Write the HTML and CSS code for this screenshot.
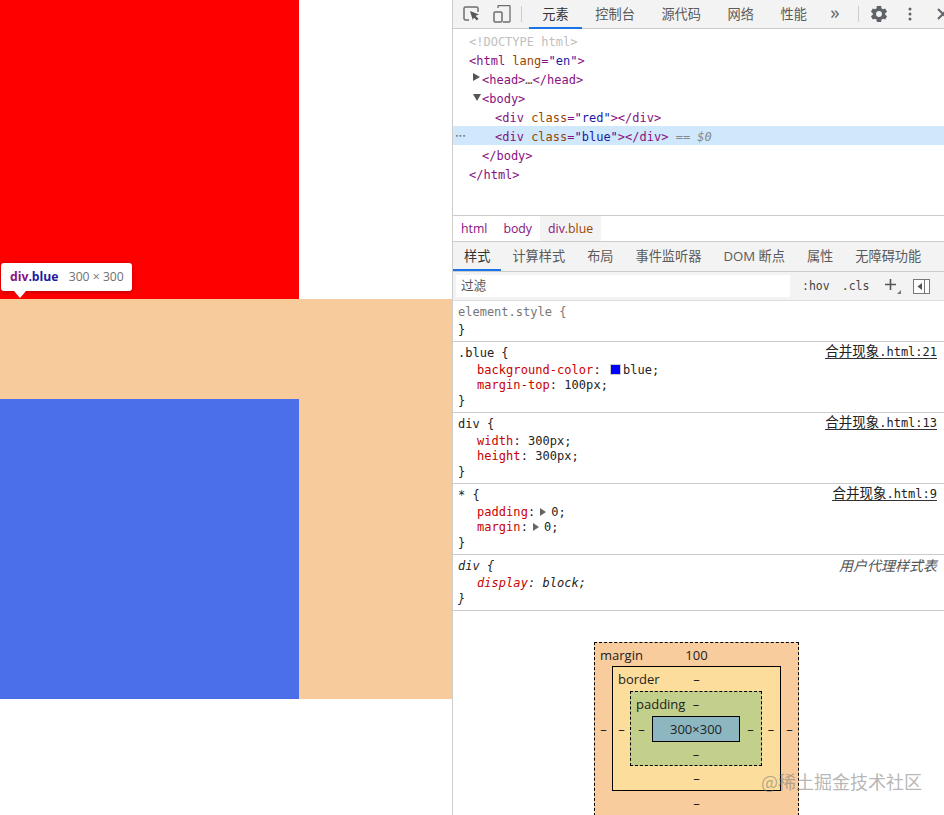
FILE: index.html
```html
<!DOCTYPE html>
<html lang="en">
  <head>
    <meta charset="UTF-8" />
    <meta name="viewport" content="width=device-width, initial-scale=1.0" />
    <title>合并现象</title>
    <link rel="stylesheet" href="styles.css">
  </head>
  <body>
    <div class="page">
      <!-- page being inspected -->
      <div class="viewport">
        <div class="red"></div>
        <div class="margin-area">
          <div class="blue"></div>
        </div>
        <div class="tooltip">
          <span class="tip-tag">div</span><span class="tip-class">.blue</span>
          <span class="tip-size">300 × 300</span>
        </div>
      </div>

      <!-- devtools -->
      <div class="devtools">
        <div class="toolbar">
          <div class="tool-icons">
            <svg class="icon-inspect" width="18" height="16" viewBox="0 0 18 16">
              <path d="M6 14H2.5A1.5 1.5 0 0 1 1 12.500V2.500A1.500 1.500 0 0 1 2.500 1H13.500A1.500 1.500 0 0 1 15 2.500V6" fill="none" stroke="#6e6e6e" stroke-width="1.500" />
              <path d="M7 5l9 3.500-3.500 1.300 3 3-1.600 1.600-3-3L9.800 14z" fill="#555" />
            </svg>
            <svg class="icon-device" width="18" height="18" viewBox="0 0 18 18">
              <path d="M5 3V1.500A1 1 0 0 1 6 .5H16A1 1 0 0 1 17 1.500V16A1 1 0 0 1 16 17H10" fill="none" stroke="#6e6e6e" stroke-width="1.300" />
              <rect x="1" y="7" width="8" height="10" rx="1" fill="none" stroke="#6e6e6e" stroke-width="1.500" />
            </svg>
          </div>
          <span class="sep"></span>
          <div class="tab active">元素</div>
          <div class="tab">控制台</div>
          <div class="tab">源代码</div>
          <div class="tab">网络</div>
          <div class="tab">性能</div>
          <div class="more">»</div>
          <span class="sep sep-right"></span>
          <svg class="icon-gear" width="20" height="20" viewBox="0 0 24 24">
            <path fill="#5f6368" fill-rule="evenodd" d="M19.400 13a7.600 7.600 0 0 0 0-2l2.300-1.700-2.300-4-2.600 1.100a7.400 7.400 0 0 0-1.800-1L14.600 2.500H9.400L9 5.400a7.400 7.400 0 0 0-1.800 1L4.600 5.300l-2.300 4L4.600 11a7.600 7.600 0 0 0 0 2l-2.300 1.700 2.300 4 2.600-1.100a7.400 7.400 0 0 0 1.800 1l.4 2.900h5.200l.4-2.900a7.400 7.400 0 0 0 1.800-1l2.600 1.100 2.300-4zM12 15.500a3.500 3.500 0 1 1 0-7 3.500 3.500 0 0 1 0 7z" />
          </svg>
          <svg class="icon-dots" width="4" height="14" viewBox="0 0 4 14">
            <circle cx="2" cy="2" r="1.500" fill="#5f6368" />
            <circle cx="2" cy="7" r="1.500" fill="#5f6368" />
            <circle cx="2" cy="12" r="1.500" fill="#5f6368" />
          </svg>
          <svg class="icon-close" width="12" height="12" viewBox="0 0 12 12">
            <path d="M1 1l10 10M11 1L1 11" stroke="#5f6368" stroke-width="2" />
          </svg>
        </div>

        <div class="dom-tree">
          <div class="dom-row indent-0 doctype">&lt;!DOCTYPE html&gt;</div>
          <div class="dom-row indent-0"><span class="tag">&lt;html</span> <span class="attr">lang</span><span class="tag">=</span><span class="val">"en"</span><span class="tag">&gt;</span></div>
          <div class="dom-row indent-1"><span class="arrow right"></span><span class="tag">&lt;head&gt;</span><span class="dots">…</span><span class="tag">&lt;/head&gt;</span></div>
          <div class="dom-row indent-1"><span class="arrow down"></span><span class="tag">&lt;body&gt;</span></div>
          <div class="dom-row indent-2"><span class="tag">&lt;div</span> <span class="attr">class</span><span class="tag">=</span><span class="val">"red"</span><span class="tag">&gt;&lt;/div&gt;</span></div>
          <div class="dom-row indent-2 selected"><span class="row-menu">•••</span><span class="tag">&lt;div</span> <span class="attr">class</span><span class="tag">=</span><span class="val">"blue"</span><span class="tag">&gt;&lt;/div&gt;</span> <span class="eq">== $0</span></div>
          <div class="dom-row indent-1"><span class="tag">&lt;/body&gt;</span></div>
          <div class="dom-row indent-0"><span class="tag">&lt;/html&gt;</span></div>
        </div>

        <div class="crumbs">
          <span class="crumb">html</span>
          <span class="crumb">body</span>
          <span class="crumb current"><span>div</span><span class="crumb-class">.blue</span></span>
        </div>

        <div class="subtabs">
          <div class="subtab active">样式</div>
          <div class="subtab">计算样式</div>
          <div class="subtab">布局</div>
          <div class="subtab">事件监听器</div>
          <div class="subtab">DOM 断点</div>
          <div class="subtab">属性</div>
          <div class="subtab">无障碍功能</div>
        </div>

        <div class="filter-bar">
          <div class="filter-input">过滤</div>
          <span class="filter-btn hov">:hov</span>
          <span class="filter-btn cls">.cls</span>
          <svg class="icon-plus" width="18" height="17" viewBox="0 0 18 17">
            <path d="M6.500 1v11M1 6.500h11" stroke="#555" stroke-width="1.600" />
            <path d="M17 12v4h-4z" fill="#777" />
          </svg>
          <svg class="icon-sidebar" width="17" height="15" viewBox="0 0 17 15">
            <rect x=".5" y=".5" width="16" height="14" fill="#fff" stroke="#777" />
            <path d="M11.500 1v13" stroke="#777" />
            <path d="M9 4v7L4.500 7.500z" fill="#555" />
          </svg>
        </div>

        <div class="rule">
          <div class="rule-head"><span class="selector muted">element.style {</span></div>
          <div class="rule-end">}</div>
        </div>
        <div class="rule">
          <div class="rule-head"><span class="selector">.blue {</span><span class="source"><span class="cjk">合并现象</span>.html:21</span></div>
          <div class="decl"><span class="prop">background-color</span>: <span class="swatch"></span>blue;</div>
          <div class="decl"><span class="prop">margin-top</span>: 100px;</div>
          <div class="rule-end">}</div>
        </div>
        <div class="rule">
          <div class="rule-head"><span class="selector">div {</span><span class="source"><span class="cjk">合并现象</span>.html:13</span></div>
          <div class="decl"><span class="prop">width</span>: 300px;</div>
          <div class="decl"><span class="prop">height</span>: 300px;</div>
          <div class="rule-end">}</div>
        </div>
        <div class="rule">
          <div class="rule-head"><span class="selector">* {</span><span class="source"><span class="cjk">合并现象</span>.html:9</span></div>
          <div class="decl"><span class="prop">padding</span>:<span class="expand"></span>0;</div>
          <div class="decl"><span class="prop">margin</span>:<span class="expand"></span>0;</div>
          <div class="rule-end">}</div>
        </div>
        <div class="rule agent">
          <div class="rule-head"><span class="selector">div {</span><span class="source-agent">用户代理样式表</span></div>
          <div class="decl"><span class="prop">display</span>: block;</div>
          <div class="rule-end">}</div>
        </div>

        <div class="box-wrap">
          <div class="box box-margin">
            <div class="box-top"><span>margin</span><span>100</span></div>
            <div class="box-side">–</div>
            <div class="box box-border">
              <div class="box-top"><span>border</span><span>–</span></div>
              <div class="box-side">–</div>
              <div class="box box-padding">
                <div class="box-top"><span>padding</span><span>–</span></div>
                <div class="box-side">–</div>
                <div class="box-content">300×300</div>
                <div class="box-side">–</div>
                <div class="box-bottom">–</div>
              </div>
              <div class="box-side">–</div>
              <div class="box-bottom">–</div>
            </div>
            <div class="box-side">–</div>
            <div class="box-bottom">–</div>
          </div>
        </div>

        <div class="watermark">@稀土掘金技术社区</div>
      </div>
    </div>
  </body>
</html>
```

FILE: styles.css
```css
* {
  box-sizing: border-box;
}
html,
body {
  margin: 0;
  padding: 0;
  background-color: white;
}
.page {
  display: flex;
  width: 944px;
  height: 815px;
  overflow: hidden;
  font-family: "Open Sans", "Noto Sans CJK SC", sans-serif;
}

/* inspected page */
.viewport {
  position: relative;
  width: 452px;
  flex-shrink: 0;
}
.red {
  width: 299px;
  height: 299px;
  background-color: #ff0000;
}
.margin-area {
  height: 400px;
  padding-top: 100px;
  background-color: #f7cb9c;
}
.blue {
  width: 299px;
  height: 300px;
  background-color: #4a6fe8;
}
.tooltip {
  position: absolute;
  left: 1px;
  top: 263px;
  width: 131px;
  height: 28px;
  padding-left: 9px;
  border-radius: 3px;
  background: white;
  box-shadow: 0 1px 4px rgba(0, 0, 0, 0.3);
  font-family: "Open Sans", sans-serif;
  font-size: 12.2px;
  line-height: 28px;
  white-space: nowrap;
}
.tooltip::after {
  content: "";
  position: absolute;
  left: 13px;
  top: 28px;
  border-left: 6px solid transparent;
  border-right: 6px solid transparent;
  border-top: 7px solid white;
}
.tip-tag {
  color: #881280;
  font-weight: 700;
}
.tip-class {
  color: #1a1aa6;
  font-weight: 700;
}
.tip-size {
  margin-left: 7px;
  color: #707070;
}

/* devtools */
.devtools {
  position: relative;
  width: 492px;
  flex-shrink: 0;
  border-left: 1px solid #ccc;
  overflow: hidden;
}
.toolbar {
  display: flex;
  align-items: center;
  height: 29px;
  background-color: #f3f3f3;
  border-bottom: 1px solid #ccc;
  white-space: nowrap;
}
.toolbar > * {
  flex-shrink: 0;
}
.tool-icons {
  display: flex;
  align-items: center;
  gap: 12px;
  padding-left: 10px;
  width: 68px;
}
.sep {
  width: 1px;
  height: 16px;
  background-color: #ccc;
  margin-right: 7px;
}
.tab {
  height: 29px;
  padding: 0 13.300px;
  color: #5a5a5a;
  font-size: 13.2px;
  line-height: 28px;
}
.tab.active {
  color: #333;
  border-bottom: 2px solid #1a73e8;
}
.more {
  margin-left: 10px;
  width: 19px;
  color: #666;
  font-size: 19px;
  line-height: 24px;
  padding-bottom: 4px;
}
.sep-right {
  margin: 0 10px 0 9px;
}
.icon-dots {
  margin-left: 19px;
}
.icon-close {
  margin-left: 25px;
}
.dom-tree {
  height: 187px;
  padding-top: 2px;
  border-bottom: 1px solid #ccc;
  font-family: "DejaVu Sans Mono", monospace;
  font-size: 12px;
}
.dom-row {
  position: relative;
  height: 19px;
  line-height: 22px;
  white-space: pre;
}
.indent-0 {
  padding-left: 16px;
}
.indent-1 {
  padding-left: 29px;
}
.indent-2 {
  padding-left: 42px;
}
.doctype {
  color: #c0c0c0;
}
.selected {
  background-color: #cfe8fc;
}
.row-menu {
  position: absolute;
  left: 2px;
  top: -1px;
  color: #666;
  font-size: 6px;
  letter-spacing: 0;
}
.tag {
  color: #881280;
}
.attr {
  color: #994500;
}
.val {
  color: #1a1aa6;
}
.dots {
  color: #555;
}
.eq {
  color: #888;
  font-style: italic;
}
.arrow {
  position: absolute;
  left: 20px;
  width: 0;
  height: 0;
}
.arrow.right {
  top: 4px;
  border-top: 4.5px solid transparent;
  border-bottom: 4.5px solid transparent;
  border-left: 7px solid #555;
}
.arrow.down {
  top: 6px;
  border-left: 4.5px solid transparent;
  border-right: 4.5px solid transparent;
  border-top: 7px solid #555;
}
.crumbs {
  display: flex;
  height: 26px;
  border-bottom: 1px solid #ccc;
  font-size: 12.300px;
  line-height: 25px;
  color: #881280;
}
.crumb {
  padding: 0 8px;
}
.crumb.current {
  background-color: #f3f3f3;
}
.crumb-class {
  color: #994500;
}
.subtabs {
  display: flex;
  height: 30px;
  padding-left: 0;
  background-color: #f3f3f3;
  border-bottom: 1px solid #ccc;
  white-space: nowrap;
}
.subtab {
  padding: 0 11px;
  color: #5a5a5a;
  font-size: 13.2px;
  line-height: 29px;
}
.subtab.active {
  color: #333;
  border-bottom: 2px solid #1a73e8;
}
.filter-bar {
  display: flex;
  align-items: center;
  height: 29px;
  background-color: #f3f3f3;
  border-bottom: 1px solid #ddd;
}
.filter-input {
  width: 334px;
  height: 22px;
  margin-left: 3px;
  padding-left: 5px;
  background: white;
  color: #555;
  font-size: 12.6px;
  line-height: 22px;
}
.filter-btn {
  font-family: "DejaVu Sans Mono", monospace;
  font-size: 11.500px;
  color: #444;
}
.hov {
  margin-left: 12px;
}
.cls {
  margin-left: 12px;
}
.icon-plus {
  margin-left: 15px;
}
.icon-sidebar {
  margin-left: 11px;
}
.rule {
  padding: 2px 7px 4px 5px;
  border-bottom: 1px solid #ccc;
  font-family: "DejaVu Sans Mono", "Noto Sans CJK SC", monospace;
  font-size: 12px;
  color: #222;
}
.rule-head {
  display: flex;
  justify-content: space-between;
  align-items: flex-start;
  height: 17px;
  line-height: 19px;
}
.rule-end {
  height: 17px;
  line-height: 21px;
}
.selector.muted {
  color: #777;
}
.source {
  display: block;
  height: 15px;
  border-bottom: 1px solid #333;
  line-height: 15px;
}
.cjk {
  font-size: 13.500px;
}
.source-agent {
  color: #555;
  font-style: italic;
  font-size: 14px;
}
.agent {
  font-style: italic;
}
.decl {
  height: 15px;
  line-height: 19px;
  padding-left: 19px;
  letter-spacing: 0.05px;
}
.prop {
  color: #c80000;
}
.swatch {
  display: inline-block;
  width: 11px;
  height: 11px;
  margin: 0 2px 0 2px;
  vertical-align: -1px;
  background-color: #0000ff;
  border: 1px solid #ccc;
}
.expand {
  display: inline-block;
  width: 0;
  height: 0;
  margin: 0 5px 0 5px;
  border-top: 4px solid transparent;
  border-bottom: 4px solid transparent;
  border-left: 6px solid #666;
}

/* box model diagram */
.box-wrap {
  padding: 31px 0 0 141px;
}
.box {
  display: grid;
  color: #222;
  font-size: 13px;
}
.box-margin {
  grid-template-columns: 17px 169px 17px;
  grid-template-rows: 23px 125px 24px;
  width: 205px;
  background-color: #f9cc9d;
  border: 1px dashed black;
}
.box-border {
  grid-template-columns: 17px 132px 18px;
  grid-template-rows: 24px 75px 24px;
  background-color: #fddd9b;
  border: 1px solid black;
}
.box-padding {
  grid-template-columns: 21px 88px 21px;
  grid-template-rows: 24px 26px 23px;
  background-color: #c3d08b;
  border: 1px dashed black;
}
.box-top {
  grid-column: 1 / -1;
  display: grid;
  grid-template-columns: 1fr auto 1fr;
  padding: 0 5px;
  line-height: 25px;
}
.box-top span:first-child {
  white-space: nowrap;
}
.box-side,
.box-bottom {
  text-align: center;
  align-self: center;
  line-height: 16px;
}
.box-bottom {
  grid-column: 1 / -1;
}
.box-content {
  background-color: #8cb6c0;
  border: 1px solid black;
  text-align: center;
  line-height: 24px;
}
.watermark {
  position: absolute;
  left: 308px;
  top: 768px;
  color: rgba(120, 120, 120, 0.55);
  font-family: "Noto Sans CJK SC", sans-serif;
  font-size: 18px;
  line-height: 26px;
  white-space: nowrap;
}
```
